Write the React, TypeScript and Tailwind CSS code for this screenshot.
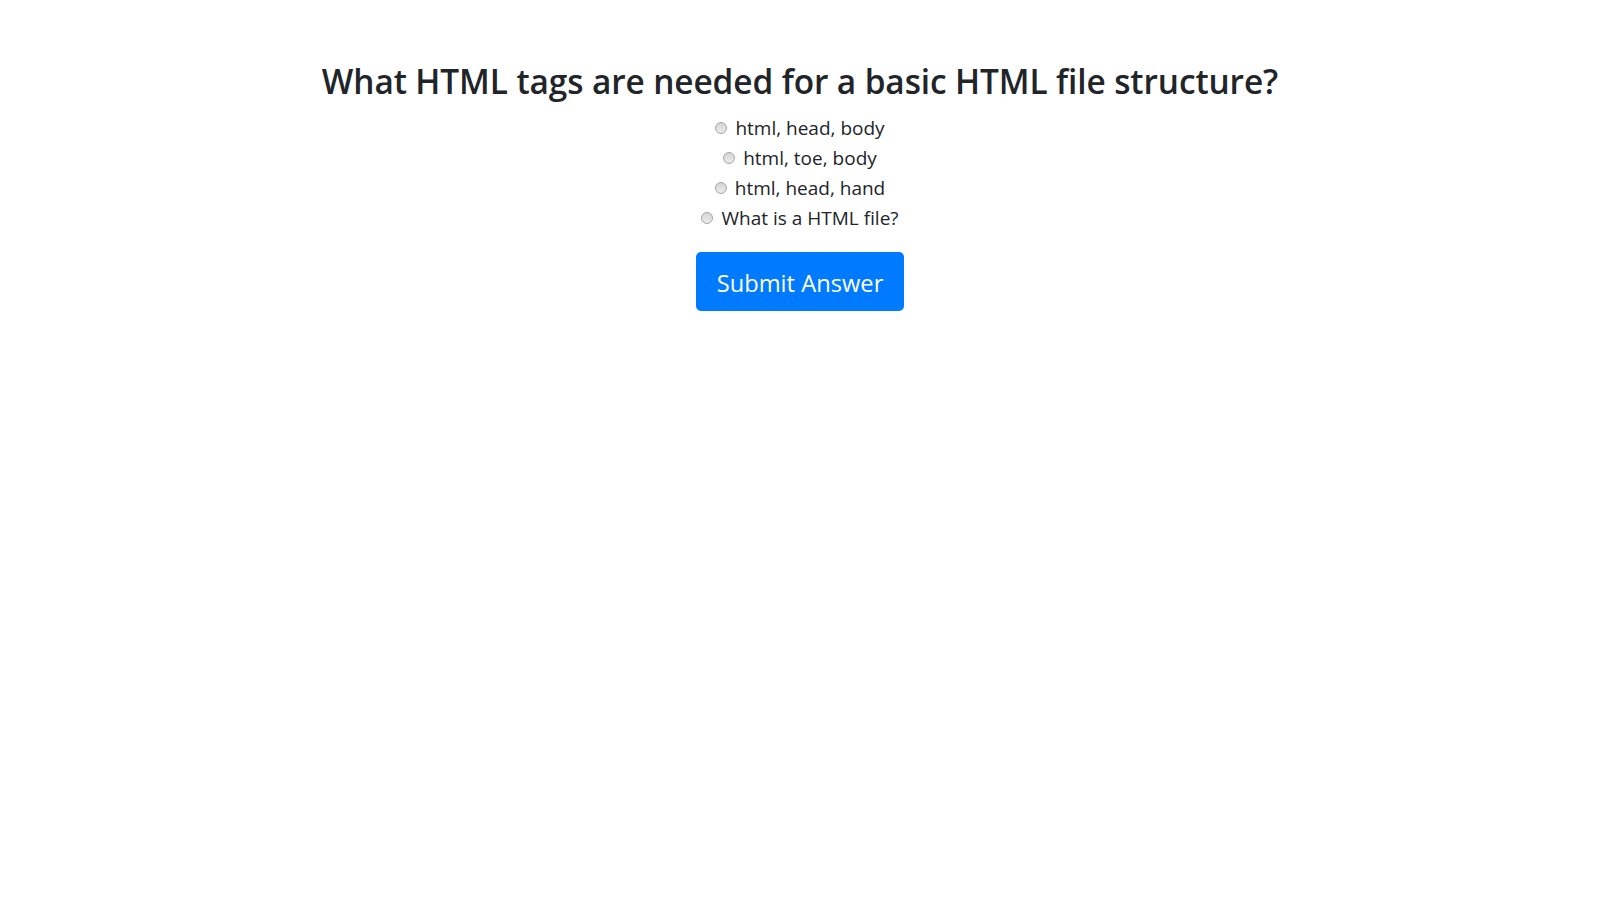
import React from "react";

const options = ["html, head, body", "html, toe, body", "html, head, hand", "What is a HTML file?"];

function Radio() {
  return (
    <span className="inline-block w-[12px] h-[12px] rounded-full border border-[#a6a6a6] bg-gradient-to-b from-[#d4d4d4] to-[#ececec] mr-[8px] shrink-0" />
  );
}

export default function App() {
  return (
    <div className="min-h-[900px] bg-white text-[#212529] font-['Open_Sans',sans-serif] flex flex-col items-center pt-[60px]">
      <h2 className="text-[33.4px] font-semibold leading-[43px] mb-[9px] tracking-[-0.1px]">
        What HTML tags are needed for a basic HTML file structure?
      </h2>
      <div className="flex flex-col items-center">
        {options.map((o) => (
          <label key={o} className="flex items-center h-[30px] text-[19px] pt-[2px]">
            <Radio />
            <span>{o}</span>
          </label>
        ))}
      </div>
      <button className="mt-[20px] w-[208px] h-[59px] rounded-[5px] bg-[#007bff] text-white text-[23.7px] leading-none pt-[5px]">
        Submit Answer
      </button>
    </div>
  );
}
